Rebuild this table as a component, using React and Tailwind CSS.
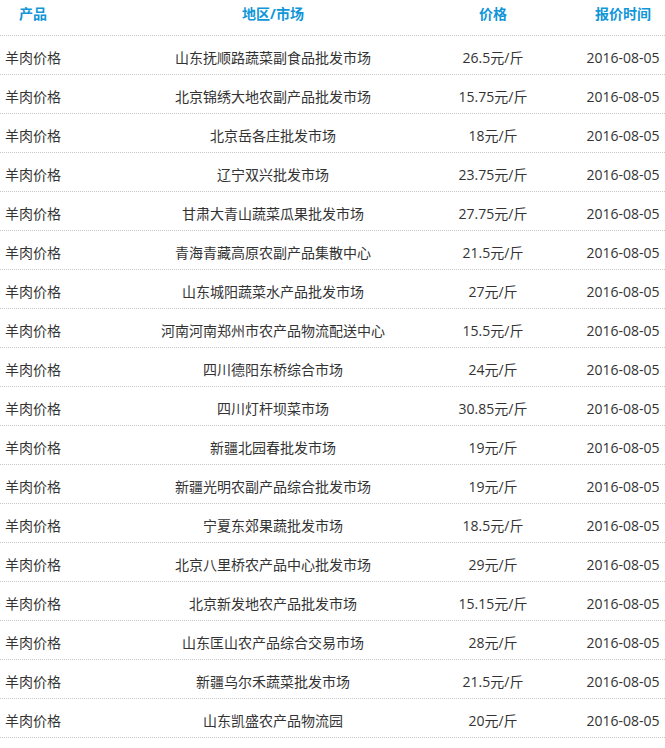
const rows = [
  ["山东抚顺路蔬菜副食品批发市场", "26.5元/斤"],
  ["北京锦绣大地农副产品批发市场", "15.75元/斤"],
  ["北京岳各庄批发市场", "18元/斤"],
  ["辽宁双兴批发市场", "23.75元/斤"],
  ["甘肃大青山蔬菜瓜果批发市场", "27.75元/斤"],
  ["青海青藏高原农副产品集散中心", "21.5元/斤"],
  ["山东城阳蔬菜水产品批发市场", "27元/斤"],
  ["河南河南郑州市农产品物流配送中心", "15.5元/斤"],
  ["四川德阳东桥综合市场", "24元/斤"],
  ["四川灯杆坝菜市场", "30.85元/斤"],
  ["新疆北园春批发市场", "19元/斤"],
  ["新疆光明农副产品综合批发市场", "19元/斤"],
  ["宁夏东郊果蔬批发市场", "18.5元/斤"],
  ["北京八里桥农产品中心批发市场", "29元/斤"],
  ["北京新发地农产品批发市场", "15.15元/斤"],
  ["山东匡山农产品综合交易市场", "28元/斤"],
  ["新疆乌尔禾蔬菜批发市场", "21.5元/斤"],
  ["山东凯盛农产品物流园", "20元/斤"],
];

function Row({ a, b, c, d, header }) {
  return (
    <div
      className={
        "flex border-b border-dotted border-[#c8c8c8] " +
        (header ? "h-[36px] items-start pt-[4px] font-bold text-[#1196d8]" : "h-[39px] items-center pt-[6px] text-[#333333]")
      }
    >
      <div className="w-[66px] shrink-0 flex justify-center whitespace-nowrap">{a}</div>
      <div className="w-[414px] shrink-0 flex justify-center whitespace-nowrap">{b}</div>
      <div className="w-[26px] shrink-0 flex justify-center whitespace-nowrap">{c}</div>
      <div className="ml-[75px] w-[84px] shrink-0 flex justify-center whitespace-nowrap">{d}</div>
    </div>
  );
}

export default function App() {
  return (
    <div
      className="w-[665px] h-[748px] bg-white text-[14px] leading-[20px] overflow-hidden"
      style={{ fontFamily: '"Open Sans", "Noto Sans CJK SC", sans-serif' }}
    >
      <Row header a="产品" b="地区/市场" c="价格" d="报价时间" />
      {rows.map(([m, p], i) => (
        <Row key={i} a="羊肉价格" b={m} c={p} d="2016-08-05" />
      ))}
    </div>
  );
}
